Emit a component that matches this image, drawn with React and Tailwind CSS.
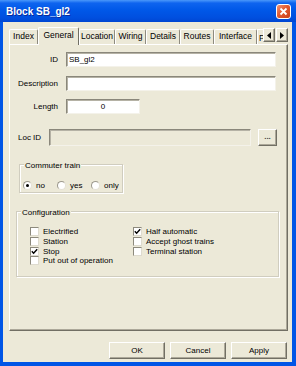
const Check = () => (
  <svg width="7" height="7" viewBox="0 0 7 7" className="block">
    <path d="M0.8 3.3 L2.6 5.2 L6.2 1.2" fill="none" stroke="#000" strokeWidth="1.4" />
  </svg>
);

function CheckBox({ label, checked }) {
  return (
    <div className="flex items-center h-[9.67px]">
      <div className="w-[9px] h-[9px] bg-white border border-t-[#8d8a7d] border-l-[#8d8a7d] border-b-[#dedbcf] border-r-[#dedbcf] flex items-center justify-center shrink-0">
        {checked && <Check />}
      </div>
      <span className="ml-[4px] leading-[9px] whitespace-nowrap">{label}</span>
    </div>
  );
}

function Radio({ label, checked, w }) {
  return (
    <div className={`flex items-center ${w}`}>
      <div className="w-[9px] h-[9px] rounded-full bg-white border border-t-[#9c998c] border-l-[#9c998c] border-b-[#e4e1d5] border-r-[#e4e1d5] flex items-center justify-center shrink-0">
        {checked && <div className="w-[3px] h-[3px] rounded-full bg-black" />}
      </div>
      <span className="ml-[4px] leading-[9px]">{label}</span>
    </div>
  );
}

function Tab({ label, w, selected }) {
  if (selected) {
    return (
      <div className={`${w} h-[18px] bg-[#ece9d8] border-l border-t border-white border-r border-r-[#716f64] rounded-t-[2px] flex items-center justify-center pb-[3px] relative z-20 shrink-0 text-[8.5px]`}>
        {label}
      </div>
    );
  }
  return (
    <div className={`${w} h-[15px] mb-[1px] border-l border-t border-white border-r border-r-[#8e8b7f] rounded-t-[2px] flex items-center justify-center pb-[1px] shrink-0 overflow-hidden whitespace-nowrap text-[8.5px]`}>
      {label}
    </div>
  );
}

function Btn({ children, className = "" }) {
  return (
    <div className={`bg-[#ece9d8] border border-t-white border-l-white border-b-[#716f64] border-r-[#716f64] shadow-[inset_-1px_-1px_0_#aca899] flex items-center justify-center ${className}`}>
      {children}
    </div>
  );
}

function Input({ className = "", children, disabled }) {
  return (
    <div className={`${disabled ? "bg-[#ece9d8]" : "bg-white"} border border-t-[#8a877b] border-l-[#8a877b] border-b-[#f4f2ea] border-r-[#f4f2ea] shadow-[inset_1px_1px_0_#b5b2a5] flex items-center ${className}`}>
      {children}
    </div>
  );
}

export default function App() {
  return (
    <div className="w-[296px] h-[366px] bg-[#0055e6] flex flex-col font-['Liberation_Sans',Arial,sans-serif] text-[8px] text-black overflow-hidden">
      {/* Title bar */}
      <div className="h-[22px] shrink-0 flex items-center justify-between pl-[6px] pr-[5px] bg-[linear-gradient(180deg,#4a98fa_0%,#0e64ef_14%,#0058e8_45%,#004fdf_80%,#0046d2_100%)]">
        <span className="text-white font-bold text-[10px] [text-shadow:1px_1px_0_#0a2a9a]">Block SB_gl2</span>
        <div className="w-[15px] h-[15px] rounded-[3px] border border-white bg-[linear-gradient(135deg,#f29477_0%,#e25a30_45%,#c8401a_100%)] flex items-center justify-center">
          <svg width="9" height="9" viewBox="0 0 9 9">
            <path d="M1.5 1.5 L7.5 7.5 M7.5 1.5 L1.5 7.5" stroke="#fff" strokeWidth="1.8" />
          </svg>
        </div>
      </div>

      {/* Client area */}
      <div className="flex-1 ml-[3px] mr-[4px] mb-[4px] bg-[#ece9d8] flex flex-col">
        {/* Tabs */}
        <div className="h-[23px] pt-[5px] pl-[6px] flex items-end relative z-10">
          <Tab label="Index" w="w-[29px]" />
          <Tab label="General" w="w-[41px]" selected />
          <Tab label="Location" w="w-[36px]" />
          <Tab label="Wiring" w="w-[31px]" />
          <Tab label="Details" w="w-[34px]" />
          <Tab label="Routes" w="w-[34px]" />
          <Tab label="Interface" w="w-[43px]" />
          <div className="w-[6px] h-[15px] mb-[1px] border-l border-t border-white overflow-hidden whitespace-nowrap pl-[1px] pt-[2px] shrink-0 text-[8.5px]">P</div>
          <div className="flex mb-[3px] gap-[1px]">
            <Btn className="w-[12px] h-[14px]">
              <svg width="4" height="7" viewBox="0 0 4 7"><path d="M4 0 L0 3.5 L4 7 Z" fill="#000" /></svg>
            </Btn>
            <Btn className="w-[12px] h-[14px]">
              <svg width="4" height="7" viewBox="0 0 4 7"><path d="M0 0 L4 3.5 L0 7 Z" fill="#000" /></svg>
            </Btn>
          </div>
        </div>

        {/* Panel */}
        <div className="ml-[6px] mr-[4px] -mt-[1px] h-[287px] border border-t-white border-l-white border-b-[#716f64] border-r-[#716f64] shadow-[inset_-1px_-1px_0_#aca899] flex flex-col">
          <div className="mt-[7px] flex items-center">
            <div className="w-[48px] text-right">ID</div>
            <Input className="ml-[8px] w-[210px] h-[15px] pl-[2px]">SB_gl2</Input>
          </div>
          <div className="mt-[9px] flex items-center">
            <div className="w-[48px] text-right">Description</div>
            <Input className="ml-[8px] w-[210px] h-[15px]" />
          </div>
          <div className="mt-[8px] flex items-center">
            <div className="w-[48px] text-right">Length</div>
            <Input className="ml-[8px] w-[74px] h-[15px] justify-center">0</Input>
          </div>
          <div className="mt-[15px] flex items-center h-[17px]">
            <div className="ml-[8px] w-[31px]">Loc ID</div>
            <Input disabled className="w-[202px] h-[17px]" />
            <Btn className="ml-[7px] w-[19px] h-[17px] font-bold pb-[2px] text-[#444]">...</Btn>
          </div>

          {/* Commuter train */}
          <div className="mt-[18px] ml-[9px] w-[104px] h-[29px] border border-[#d0cdbf] shadow-[inset_1px_1px_0_#fff,1px_1px_0_#fff] relative pt-[13px] pl-[3px] flex">
            <span className="absolute left-[4px] top-[-4px] px-[1px] bg-[#ece9d8] leading-[9px]">Commuter train</span>
            <Radio label="no" checked w="w-[34px]" />
            <Radio label="yes" w="w-[34px]" />
            <Radio label="only" w="" />
          </div>

          {/* Configuration */}
          <div className="mt-[18px] ml-[6px] w-[263px] h-[66px] border border-[#d0cdbf] shadow-[inset_1px_1px_0_#fff,1px_1px_0_#fff] relative pt-[15px] pl-[13px] flex">
            <span className="absolute left-[4px] top-[-4px] px-[1px] bg-[#ece9d8] leading-[9px]">Configuration</span>
            <div className="w-[103px] flex flex-col">
              <CheckBox label="Electrified" />
              <CheckBox label="Station" />
              <CheckBox label="Stop" checked />
              <CheckBox label="Put out of operation" />
            </div>
            <div className="flex flex-col">
              <CheckBox label="Half automatic" checked />
              <CheckBox label="Accept ghost trains" />
              <CheckBox label="Terminal station" />
            </div>
          </div>
        </div>

        {/* Buttons */}
        <div className="mt-[11px] flex justify-end gap-[5px] pr-[5px]">
          <Btn className="w-[56px] h-[17px]">OK</Btn>
          <Btn className="w-[56px] h-[17px]">Cancel</Btn>
          <Btn className="w-[56px] h-[17px]">Apply</Btn>
        </div>
      </div>
    </div>
  );
}
